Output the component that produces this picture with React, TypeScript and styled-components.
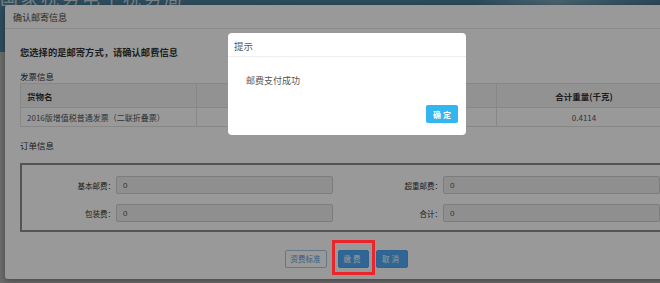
import React from 'react';
import styled, { createGlobalStyle } from 'styled-components';

const GlobalStyle = createGlobalStyle`
  html, body {
    margin: 0;
    padding: 0;
    background: #b4b4b4;
    font-family: "Noto Sans CJK SC", "Liberation Sans", sans-serif;
    color: #333;
  }
`;

const Page = styled.div`
  position: relative;
  width: 660px;
  height: 283px;
  overflow: hidden;
`;

const Banner = styled.div`
  height: 52px;
  background: linear-gradient(90deg, #4d7f99 0%, #4a7c96 72%, #7aa2b6 84%, #5d8aa2 92%, #4a7891 100%);
`;

/* only the bottom of the site title peeks out above the dialog */
const BannerTitle = styled.div`
  height: 6px;
  overflow: hidden;
  display: flex;
  align-items: flex-end;
  font-size: 18px;
  line-height: 18px;
  letter-spacing: 2.5px;
  color: #c9d8e0;
  white-space: nowrap;
`;

const Dialog = styled.div`
  position: absolute;
  top: 5px;
  left: 5px;
  width: 682px;
  background: #fff;
  border-radius: 3px;
  box-shadow: 0 2px 6px rgba(0, 0, 0, 0.35);
`;

const DialogHeader = styled.div`
  height: 23px;
  padding-left: 8px;
  border-bottom: 1px solid #e8e8e8;
  font-size: 9px;
  line-height: 25px;
  color: #444;
`;

const DialogBody = styled.div`
  padding: 15px 15px 11px;
`;

const Lead = styled.div`
  font-size: 9.3px;
  line-height: 16px;
  font-weight: 700;
  color: #333;
  margin-bottom: 9px;
`;

const SectionTitle = styled.div<{ $gap?: number }>`
  font-size: 8.5px;
  line-height: 14px;
  color: #333;
  margin-top: ${p => p.$gap ?? 0}px;
`;

const Table = styled.table`
  width: 100%;
  border-collapse: collapse;
  table-layout: fixed;
  font-size: 8px;
  color: #555;
`;

const Th = styled.th<{ $align?: string; $w?: number }>`
  height: 23px;
  padding: 0 6px;
  width: ${p => (p.$w ? `${p.$w}px` : 'auto')};
  text-align: ${p => p.$align || 'left'};
  background: #f4f4f4;
  border: 1px solid #e2e2e2;
  font-weight: 700;
  font-size: 8.5px;
  color: #333;
`;

const Td = styled.td<{ $align?: string }>`
  height: 18px;
  padding: 0 6px;
  text-align: ${p => p.$align || 'left'};
  border: 1px solid #e2e2e2;
  white-space: nowrap;
`;

const FieldBox = styled.div`
  margin-top: 11px;
  border: 2px solid #8c8c8c;
  padding: 11px 0 8px;
  display: grid;
  grid-template-columns: 94px 217px 110px 217px;
  row-gap: 10px;
  align-items: center;
`;

const Label = styled.label`
  font-size: 7.5px;
  color: #333;
  text-align: right;
  padding-right: 1px;
`;

const Input = styled.input`
  box-sizing: border-box;
  width: 100%;
  height: 18px;
  margin: 0;
  padding: 0 6px;
  border: 1px solid #d0d0d0;
  border-radius: 2px;
  background: #eee;
  font-family: "Liberation Sans", sans-serif;
  font-size: 8px;
  color: #555;
`;

const Actions = styled.div`
  margin-top: 18px;
  display: flex;
  justify-content: center;
  gap: 7px;
`;

const Button = styled.button<{ $outline?: boolean; $w: number }>`
  width: ${p => p.$w}px;
  height: 18px;
  padding: 0;
  border: 1px solid ${p => (p.$outline ? '#a9c6e0' : '#4ea3f0')};
  border-radius: 2px;
  background: ${p => (p.$outline ? '#fff' : '#52a8f5')};
  color: ${p => (p.$outline ? '#5a9ad6' : '#fff')};
  font-family: "Noto Sans CJK SC", sans-serif;
  font-size: 7.5px;
  letter-spacing: ${p => (p.$outline ? 0 : 2)}px;
  line-height: 16px;
`;

const Highlight = styled.span`
  position: relative;
  display: inline-flex;
  margin-left: 4px;

  &::after {
    content: '';
    position: absolute;
    left: -6px;
    right: -6px;
    top: -10px;
    bottom: -7px;
    border: 3px solid #e8262b;
    z-index: 3;
  }
`;

const Overlay = styled.div`
  position: fixed;
  inset: 0;
  background: rgba(0, 0, 0, 0.4);
  z-index: 1;
`;

const Alert = styled.div`
  position: absolute;
  left: 228px;
  top: 33px;
  width: 238px;
  background: #fff;
  border-radius: 4px;
  z-index: 2;
  display: flex;
  flex-direction: column;
`;

const AlertHeader = styled.div`
  height: 23px;
  padding-left: 6px;
  border-bottom: 1px solid #eee;
  font-size: 9.5px;
  line-height: 26px;
  color: #555;
`;

const AlertBody = styled.div`
  padding: 18px 18px 0;
  font-size: 9px;
  line-height: 12px;
  color: #555;
`;

const AlertFooter = styled.div`
  display: flex;
  justify-content: flex-end;
  padding: 18px 8px 12px;
`;

const OkButton = styled.button`
  width: 32px;
  height: 18px;
  padding: 0 0 0 2px;
  border: none;
  border-radius: 2px;
  background: #33b5ef;
  color: #fff;
  font-family: "Noto Sans CJK SC", sans-serif;
  font-size: 8px;
  font-weight: 700;
  letter-spacing: 2px;
`;

const fees = [
  ['基本邮费：', '0', '超重邮费：', '0'],
  ['包装费：', '0', '合计：', '0'],
];

export default function App() {
  return (
    <Page>
      <GlobalStyle />
      <Banner>
        <BannerTitle>国家税务电子税务局</BannerTitle>
      </Banner>

      <Dialog>
        <DialogHeader>确认邮寄信息</DialogHeader>
        <DialogBody>
          <Lead>您选择的是邮寄方式，请确认邮费信息</Lead>
          <SectionTitle>发票信息</SectionTitle>
          <Table>
            <thead>
              <tr>
                <Th $w={163}>货物名</Th>
                <Th $align="center">数量</Th>
                <Th $w={162} $align="center">合计重量(千克)</Th>
              </tr>
            </thead>
            <tbody>
              <tr>
                <Td>2016版增值税普通发票（二联折叠票）</Td>
                <Td $align="center">1</Td>
                <Td $align="center">0.4114</Td>
              </tr>
            </tbody>
          </Table>

          <SectionTitle $gap={11}>订单信息</SectionTitle>
          <FieldBox>
            {fees.map(row => (
              <React.Fragment key={row[0]}>
                <Label>{row[0]}</Label>
                <Input value={row[1]} readOnly />
                <Label>{row[2]}</Label>
                <Input value={row[3]} readOnly />
              </React.Fragment>
            ))}
          </FieldBox>

          <Actions>
            <Button $outline $w={42}>资费标准</Button>
            <Highlight>
              <Button $w={31}>缴费</Button>
            </Highlight>
            <Button $w={32}>取消</Button>
          </Actions>
        </DialogBody>
      </Dialog>

      <Overlay />

      <Alert>
        <AlertHeader>提示</AlertHeader>
        <AlertBody>邮费支付成功</AlertBody>
        <AlertFooter>
          <OkButton>确定</OkButton>
        </AlertFooter>
      </Alert>
    </Page>
  );
}
